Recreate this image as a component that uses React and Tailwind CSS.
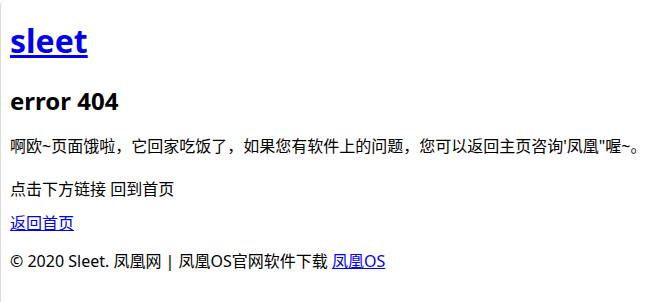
import React from 'react';

const font = { fontFamily: '"Noto Sans", "Noto Sans CJK SC", sans-serif' };

export default function App() {
  return (
    <div
      className="h-screen bg-white text-black border-l border-[#dcdcdc] rounded-tl-[6px] pl-[9px] flex flex-col items-start"
      style={font}
    >
      <h1 className="mt-[20px] text-[32px] leading-[42px] font-bold">
        <a href="#" className="text-[#0000ee] underline">sleet</a>
      </h1>
      <h2 className="mt-[23px] text-[24px] leading-[32px] font-bold">error 404</h2>
      <p className="mt-[19px] text-[16px] leading-[21px]">
        啊欧~页面饿啦，它回家吃饭了，如果您有软件上的问题，您可以返回主页咨询'凤凰"喔~。
      </p>
      <p className="mt-[22px] text-[16px] leading-[21px]">点击下方链接 回到首页</p>
      <p className="mt-[13px] text-[16px] leading-[21px]">
        <a href="#" className="text-[#0000ee] underline">返回首页</a>
      </p>
      <p className="mt-[17px] text-[16px] leading-[21px]">
        © 2020 Sleet. 凤凰网 | 凤凰OS官网软件下载{' '}
        <a href="#" className="text-[#0000ee] underline">凤凰OS</a>
      </p>
    </div>
  );
}
